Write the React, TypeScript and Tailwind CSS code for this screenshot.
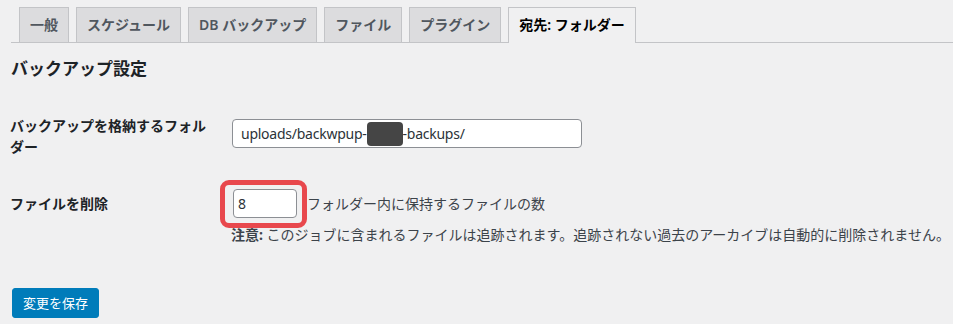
const tabs = ["一般", "スケジュール", "DB バックアップ", "ファイル", "プラグイン", "宛先: フォルダー"]

export default function App() {
  const active = tabs.length - 1
  return (
    <div className="h-[324px] w-full overflow-hidden bg-[#f0f0f1] text-[#1d2327] [font-family:'Noto_Sans','Noto_Sans_CJK_JP',sans-serif]">
      {/* Tab bar */}
      <div className="ml-[11px] flex gap-[7px] border-b border-[#c3c4c7] pl-[8px] pt-[7px]">
        {tabs.map((t, i) =>
          i === active ? (
            <div
              key={t}
              className="relative -mb-px border border-b-0 border-[#c3c4c7] bg-[#f0f0f1] px-[10px] pb-[6px] pt-[5px] text-[14px] font-semibold leading-[24px] text-black"
            >
              {t}
            </div>
          ) : (
            <div
              key={t}
              className="border border-b-0 border-[#c3c4c7] bg-[#dcdcde] px-[10px] py-[5px] text-[14px] font-semibold leading-[24px] text-[#50575e]"
            >
              {t}
            </div>
          )
        )}
      </div>

      <div className="pl-[10px]">
        <h3 className="mt-[14px] pl-px text-[17px] font-bold leading-[24px]">バックアップ設定</h3>

        {/* Folder row */}
        <div className="mt-[34px] flex items-start">
          <div className="w-[210px] pr-[10px] text-[14px] font-semibold leading-[21px]">
            バックアップを格納するフォルダー
          </div>
          <div className="pl-[12px] pt-[4px]">
            <div className="flex h-[29px] w-[350px] items-center rounded-[4px] border border-[#8c8f94] bg-white px-[8px] text-[14px] tracking-[-0.25px] text-[#2c3338]">
              <span>uploads/backwpup-</span>
              <span className="inline-block h-[24px] w-[36px] rounded-[4px] bg-[#454545]" />
              <span>-backups/</span>
            </div>
          </div>
        </div>

        {/* Delete row */}
        <div className="mt-[32px] flex items-start">
          <div className="mt-[4px] w-[210px] pr-[10px] text-[14px] font-semibold leading-[21px]">ファイルを削除</div>
          <div className="pl-[11px]">
            <div className="flex items-center">
              <div className="relative ml-[2px]">
                <div className="flex h-[29px] w-[64px] items-center rounded-[4px] border border-[#8c8f94] bg-white pl-[4px] text-[14px] text-[#2c3338]">
                  8
                </div>
                {/* annotation box */}
                <div className="absolute -left-[13px] -top-[9px] h-[48px] w-[87px] rounded-[9px] border-[5px] border-[#e8484d]" />
              </div>
              <span className="ml-[10px] text-[14px] text-[#3c434a]">フォルダー内に保持するファイルの数</span>
            </div>
            <p className="mt-[6px] text-[14px] leading-[21px] text-[#3c434a]">
              <strong className="font-bold">注意:</strong>{" "}
              このジョブに含まれるファイルは追跡されます。追跡されない過去のアーカイブは自動的に削除されません。
            </p>
          </div>
        </div>

        <button className="ml-[2px] mt-[43px] h-[30px] rounded-[3px] border border-[#007cba] bg-[#007cba] px-[10px] text-[13px] leading-[28px] text-white">
          変更を保存
        </button>
      </div>
    </div>
  )
}
